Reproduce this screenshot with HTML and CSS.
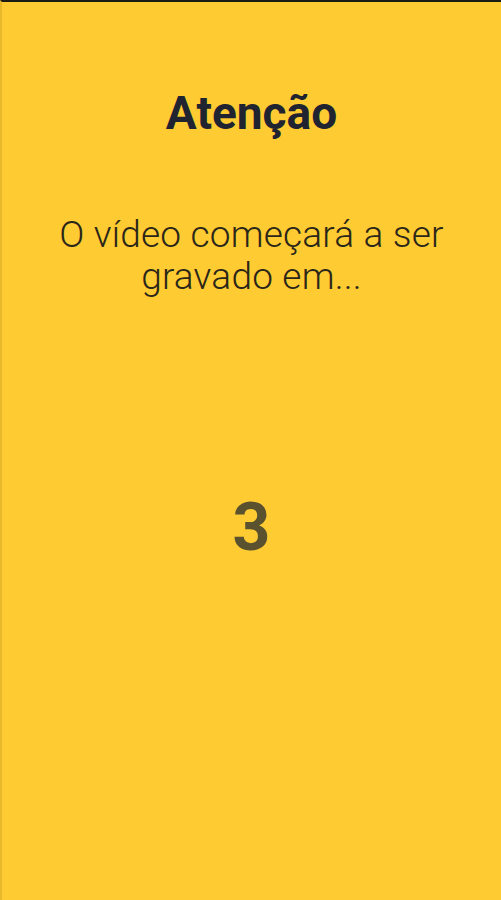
FILE: index.html
```html
<!DOCTYPE html>
<html lang="pt">
<head>
<meta charset="utf-8">
<link rel="stylesheet" href="styles.css">
</head>
<body>
<main class="screen">
  <h1 class="title">Atenção</h1>
  <p class="message">O vídeo começará a ser gravado em...</p>
  <div class="count">3</div>
</main>
</body>
</html>
```
FILE: styles.css
```css
html, body {
  margin: 0;
  padding: 0;
  background: #fecb32;
}
.screen {
  box-sizing: border-box;
  height: 900px;
  background: #fecb32;
  border-top: 2px solid #1c1a14;
  border-left: 2px solid #e9b92c;
  display: flex;
  flex-direction: column;
  align-items: center;
  padding: 84px 30px 0;
  font-family: Roboto, "Noto Sans", sans-serif;
  text-align: center;
}
.title {
  margin: 0;
  font-size: 46px;
  font-weight: 700;
  line-height: 54px;
  color: #1f2430;
}
.message {
  margin: 74px 0 0;
  font-size: 37px;
  font-weight: 300;
  line-height: 42px;
  letter-spacing: 0.2px;
  color: #2a2619;
  max-width: 420px;
}
.count {
  margin-top: 197px;
  font-size: 66px;
  font-weight: 700;
  line-height: 66px;
  color: #5a512f;
}
```
